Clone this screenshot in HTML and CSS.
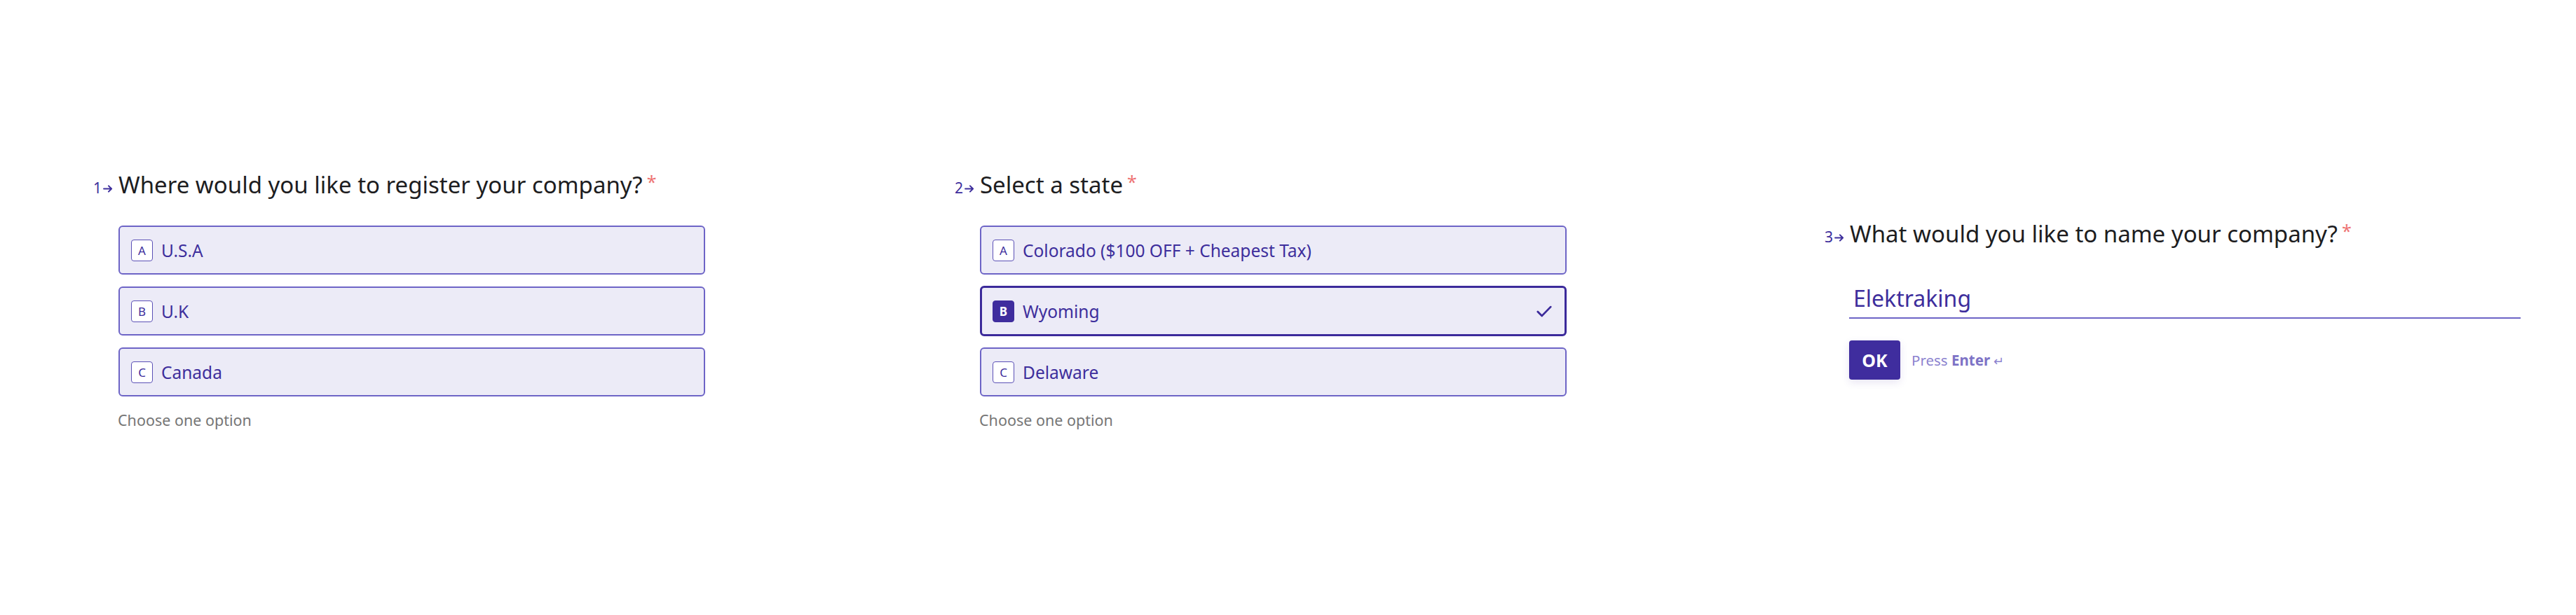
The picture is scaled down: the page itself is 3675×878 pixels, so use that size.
FILE: index.html
```html
<!DOCTYPE html>
<html lang="en">
<head>
<meta charset="utf-8">
<title>Company registration</title>
<link rel="stylesheet" href="styles.css">
</head>
<body>
<div class="page">
  <section class="col col-1">
    <h2 class="q"><span class="qnum">1<svg class="arr" viewBox="0 0 16 12"><path d="M1 6h12M8.5 1.5 13 6l-4.5 4.5" fill="none" stroke="currentColor" stroke-width="2.2" stroke-linecap="round" stroke-linejoin="round"/></svg></span><span class="qtext">Where would you like to register your company?<span class="req">*</span></span></h2>
    <div class="opts">
      <div class="opt"><span class="key">A</span><span class="label">U.S.A</span></div>
      <div class="opt"><span class="key">B</span><span class="label">U.K</span></div>
      <div class="opt"><span class="key">C</span><span class="label">Canada</span></div>
    </div>
    <p class="hint">Choose one option</p>
  </section>

  <section class="col col-2">
    <h2 class="q"><span class="qnum">2<svg class="arr" viewBox="0 0 16 12"><path d="M1 6h12M8.5 1.5 13 6l-4.5 4.5" fill="none" stroke="currentColor" stroke-width="2.2" stroke-linecap="round" stroke-linejoin="round"/></svg></span><span class="qtext">Select a state<span class="req">*</span></span></h2>
    <div class="opts">
      <div class="opt"><span class="key">A</span><span class="label">Colorado ($100 OFF + Cheapest Tax)</span></div>
      <div class="opt selected"><span class="key">B</span><span class="label">Wyoming</span>
        <svg class="check" viewBox="0 0 24 18"><path d="M2 9.5 8.5 16 22 2" fill="none" stroke="currentColor" stroke-width="3" stroke-linecap="round" stroke-linejoin="round"/></svg>
      </div>
      <div class="opt"><span class="key">C</span><span class="label">Delaware</span></div>
    </div>
    <p class="hint">Choose one option</p>
  </section>

  <section class="col col-3">
    <h2 class="q"><span class="qnum">3<svg class="arr" viewBox="0 0 16 12"><path d="M1 6h12M8.5 1.5 13 6l-4.5 4.5" fill="none" stroke="currentColor" stroke-width="2.2" stroke-linecap="round" stroke-linejoin="round"/></svg></span><span class="qtext">What would you like to name your company?<span class="req">*</span></span></h2>
    <div class="answer">Elektraking</div>
    <div class="actions">
      <button class="ok">OK</button>
      <span class="press">Press <b>Enter</b> <span class="ret">↵</span></span>
    </div>
  </section>
</div>
</body>
</html>
```

FILE: styles.css
```css
* { box-sizing: border-box; }
html, body { margin: 0; padding: 0; background: #ffffff; }
body {
  font-family: "Noto Sans", "Open Sans", sans-serif;
  width: 3675px;
  height: 878px;
  overflow: hidden;
}
.page {
  display: grid;
  grid-template-columns: 1229px 1241px 1fr;
  height: 878px;
}
.col { padding-left: 133px; }
.col-1, .col-2 { padding-top: 244px; }
.col-3 { padding-top: 314px; }

.q {
  margin: 0;
  font-weight: 400;
  font-size: 33px;
  line-height: 40px;
  color: #1d1d1f;
  white-space: nowrap;
}
.qnum {
  display: inline-block;
  width: 36px;
  font-size: 21px;
  line-height: 1;
  color: #3d2e9c;
}
.arr {
  width: 15px;
  height: 11px;
  margin-left: 2px;
  color: #3d2e9c;
  vertical-align: 1px;
}
.req {
  color: #ee7373;
  font-size: 25px;
  line-height: 0;
  margin-left: 6px;
  vertical-align: 7px;
}

.opts {
  margin: 38px 0 0 36px;
  width: 837px;
  display: flex;
  flex-direction: column;
  gap: 17px;
}
.opt {
  height: 70px;
  display: flex;
  align-items: center;
  padding: 0 18px 0 16px;
  background: #ecebf7;
  border: 2px solid #6d64c6;
  border-radius: 6px;
  color: #3d2e9c;
}
.opt.selected {
  border: 3px solid #3b2a9a;
  padding-left: 15px;
  height: 72px;
  margin: -1px 0;
}
.key {
  width: 31px;
  height: 31px;
  flex: none;
  display: flex;
  align-items: center;
  justify-content: center;
  border: 1.5px solid #5b50b6;
  border-radius: 4px;
  background: #ffffff;
  font-size: 17px;
  color: #3d2e9c;
}
.selected .key {
  background: #3f2d9e;
  border-color: #3f2d9e;
  color: #ffffff;
  font-weight: 700;
}
.label {
  margin-left: 12px;
  font-size: 24.5px;
  white-space: nowrap;
}
.check {
  margin-left: auto;
  width: 22px;
  height: 17px;
  color: #3b2a9a;
}
.hint {
  margin: 20px 0 0 35px;
  font-size: 21.5px;
  line-height: 28px;
  color: #767676;
}

.answer {
  margin: 52px 0 0 35px;
  width: 958px;
  padding: 0 0 7px 6px;
  font-size: 32px;
  line-height: 40px;
  color: #3d2e9c;
  border-bottom: 2px solid #6d64c6;
}
.actions {
  margin: 31px 0 0 35px;
  display: flex;
  align-items: center;
  gap: 16px;
}
.ok {
  width: 73px;
  height: 56px;
  border: none;
  border-radius: 4px;
  background: #3f2d9e;
  color: #ffffff;
  font-family: inherit;
  font-size: 25px;
  font-weight: 700;
  box-shadow: 0 4px 12px rgba(63, 45, 158, 0.12);
  padding: 0;
}
.press {
  font-size: 20.5px;
  color: #8c83cf;
}
.press b { font-weight: 700; color: #7d73c6; }
.ret { font-size: 18px; }
```
